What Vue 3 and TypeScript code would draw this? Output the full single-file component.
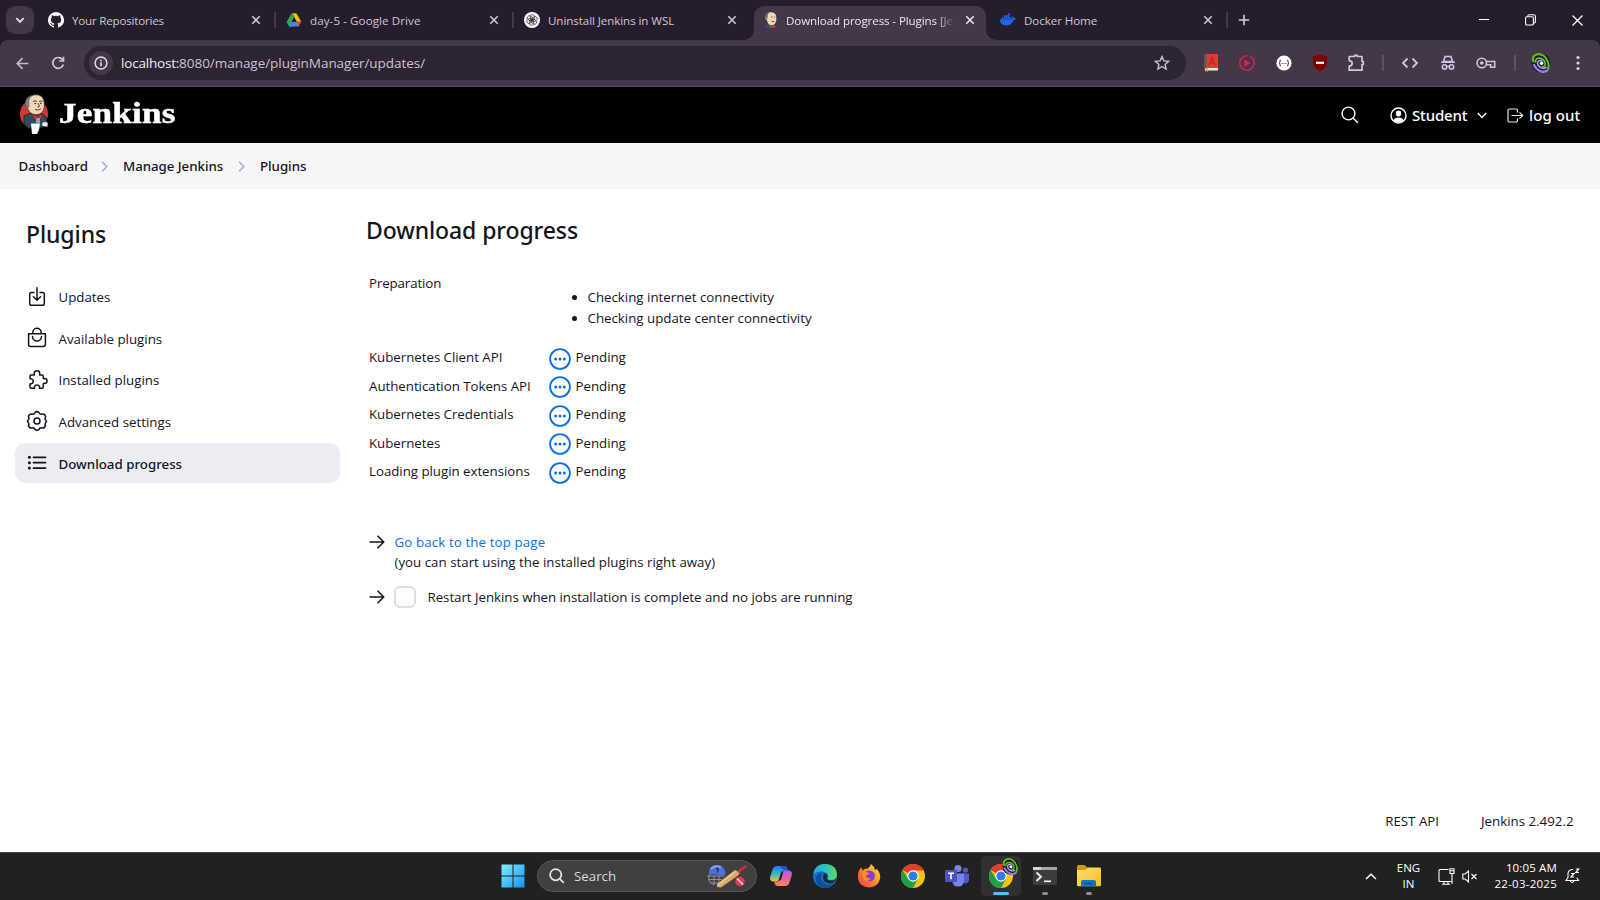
<script setup lang="ts">
interface Tab {
  title: string
  icon: 'github' | 'drive' | 'gpt' | 'jenkins' | 'docker'
  active?: boolean
}
const tabs: Tab[] = [
  { title: 'Your Repositories', icon: 'github' },
  { title: 'day-5 - Google Drive', icon: 'drive' },
  { title: 'Uninstall Jenkins in WSL', icon: 'gpt' },
  { title: 'Download progress - Plugins [Je', icon: 'jenkins', active: true },
  { title: 'Docker Home', icon: 'docker' },
]
const menu = [
  { label: 'Updates', icon: 'updates' },
  { label: 'Available plugins', icon: 'bag' },
  { label: 'Installed plugins', icon: 'puzzle' },
  { label: 'Advanced settings', icon: 'gear' },
  { label: 'Download progress', icon: 'list', active: true },
]
const jobs: string[] = [
  'Kubernetes Client API',
  'Authentication Tokens API',
  'Kubernetes Credentials',
  'Kubernetes',
  'Loading plugin extensions',
]
</script>

<template>
  <div class="screen">
    <svg width="0" height="0" class="defs">
      <defs>
        <linearGradient id="win" x1="0" y1="0" x2="1" y2="1">
          <stop offset="0" stop-color="#7ff0fb" /><stop offset="1" stop-color="#0e93f5" />
        </linearGradient>
        <linearGradient id="cpa" x1="0" y1="0" x2="0" y2="1">
          <stop offset="0" stop-color="#1c7be8" /><stop offset=".5" stop-color="#35b6c9" /><stop offset="1" stop-color="#f2c52c" />
        </linearGradient>
        <linearGradient id="cpb" x1="0" y1="0" x2="0" y2="1">
          <stop offset="0" stop-color="#a765f0" /><stop offset=".5" stop-color="#ea5da0" /><stop offset="1" stop-color="#ff8a4c" />
        </linearGradient>
        <linearGradient id="edgea" x1="0" y1="0" x2="1" y2="0">
          <stop offset="0" stop-color="#2aa7e8" /><stop offset=".6" stop-color="#35c7b0" /><stop offset="1" stop-color="#62dd52" />
        </linearGradient>
        <linearGradient id="ffx" x1="1" y1="0" x2="0" y2="1">
          <stop offset="0" stop-color="#ffe33f" /><stop offset=".5" stop-color="#ff8a1e" /><stop offset="1" stop-color="#f8315a" />
        </linearGradient>
        <linearGradient id="fold" x1="0" y1="0" x2="1" y2="1">
          <stop offset="0" stop-color="#ffdf70" /><stop offset="1" stop-color="#f8bb2a" />
        </linearGradient>
        <symbol id="chrome" viewBox="0 0 24 24">
          <circle cx="12" cy="12" r="12" fill="#fbc116" />
          <path d="M12 12 1.6 6A12 12 0 0 1 22.4 6L22.6 6.5H12Z" fill="#e33b2e" />
          <path d="M1.6 6A12 12 0 0 0 12 24L17 15 12 12 7.2 14.8Z" fill="#1fa045" />
          <circle cx="12" cy="12" r="5.7" fill="#fff" /><circle cx="12" cy="12" r="4.6" fill="#2d7de9" />
        </symbol>
        <symbol id="swirl" viewBox="0 0 20 20">
          <ellipse cx="10" cy="10" rx="9.400" ry="9.600" fill="#15131f" />
          <g fill="none" stroke-linecap="round">
            <path d="M2.500 8.500C0 2 8-1 13 3C17 6.500 18.500 12 17 16" stroke="#5fb62f" stroke-width="2.200" />
            <path d="M3 12C6 18 12 20.500 16 17.500" stroke="#9a7cf0" stroke-width="2.400" />
            <path d="M4.500 9C4 4 11 4 13.500 8.500C15 11.500 14 14 11.500 13.500" stroke="#68bf3a" stroke-width="1.700" />
            <path d="M15 14.500C11 17 6.500 13 6.500 10C6.700 7.500 9 7 10.500 8" stroke="#b39bf8" stroke-width="1.700" />
          </g>
          <circle cx="10.500" cy="10.300" r="1.800" fill="#fff" />
        </symbol>
        <symbol id="butler" viewBox="0 0 28 40">
          <ellipse cx="14" cy="20" rx="14" ry="14.500" fill="#d33833" />
          <path d="M4 22 11 19 21 19 26 23 27 28 26 32 19 34 8 34 4 29Z" fill="#2f4b5e" stroke="#1b2630" />
          <path d="M5.500 10C6 3 12 .5 17 .8C22 1.200 24.500 5 24.300 11C24.500 15 23 19.500 18 20.500C12 21.500 9 18 8 15C6 14.500 5 12.500 5.500 10Z" fill="#efd6b8" stroke="#3a302c" stroke-width=".8" />
          <path d="M5.500 11C4.500 6 8 2 12 1.500C9 4 9 6 8.500 8L9 13 7 14Z" fill="#8a8580" stroke="#4a4441" stroke-width=".6" />
          <path d="M13 7.500Q15 6 17 7.500M19 7.500Q21 6 22.500 7.500M18 9 19.500 12.500 17.500 13M15 15.500Q18.500 17 21 14.800" fill="none" stroke="#433029" stroke-width=".9" />
          <circle cx="15.300" cy="9.500" r=".8" fill="#1a1a1a" /><circle cx="20.800" cy="9.300" r=".8" fill="#1a1a1a" />
          <path d="M13 20.500 17.500 22.500 22 20V25L17.500 23.500 13.500 26Z" fill="#d33833" stroke="#7d1815" stroke-width=".5" />
          <path d="M16 24H20V29H16Z" fill="#8fa5b5" />
          <path d="M11 29.500H20L19 36 17 40H12Z" fill="#fff" />
          <path d="M22 29Q25 26.500 28 29L27.500 33 22 32Z" fill="#e9eef2" stroke="#444" stroke-width=".5" />
        </symbol>
      </defs>
    </svg>

    <header class="tabstrip">
      <button class="tabsearch"><svg width="28" height="28" viewBox="0 0 28 28"><path d="M10.300 12.200 14 15.900 17.700 12.200" fill="none" stroke="#e6d9ec" stroke-width="1.900" /></svg></button>
      <div v-for="t in tabs" :key="t.title" class="tab" :class="{ active: t.active, [t.icon]: true }">
        <svg class="fav" width="16" height="16" viewBox="0 0 16 16">
          <path v-if="t.icon === 'github'" fill="#fff" d="M8 0a8 8 0 0 0-2.530 15.590c.4.070.550-.170.550-.380v-1.490c-2.010.370-2.530-.490-2.690-.940-.090-.230-.480-.940-.820-1.130-.280-.150-.680-.520-.010-.530.630-.010 1.080.580 1.230.820.720 1.210 1.870.870 2.330.660.070-.520.280-.870.510-1.070-1.780-.2-3.640-.890-3.640-3.950 0-.870.310-1.590.820-2.150-.080-.2-.360-1.020.080-2.120 0 0 .670-.210 2.200.820a7.600 7.600 0 0 1 4 0c1.530-1.040 2.200-.820 2.200-.820.440 1.100.160 1.920.080 2.120.510.560.820 1.270.820 2.150 0 3.070-1.870 3.750-3.650 3.950.290.250.540.730.540 1.480v2.200c0 .210.150.460.550.380A8 8 0 0 0 8 0Z" />
          <g v-else-if="t.icon === 'drive'">
            <path fill="#fbbc04" d="M6 1.200H10.400L15.300 9.800H10.800Z" />
            <path fill="#4285f4" d="M3.200 9.800H12.800V14.500H3.200Z" /><path fill="#34a853" d="M5.600 1.200 8 5.300 3.200 14.500.6 10Z" />
            <path fill="#4285f4" d="M5.500 9.800H8L6 14.500H3.100Z" />
            <path fill="#ea4335" d="M11 9.800H15.400L12.700 14.500Z" /><path fill="#251d2c" d="M8 5.800 10.300 9.800H5.700Z" />
          </g>
          <g v-else-if="t.icon === 'gpt'">
            <circle cx="8" cy="8" r="8" fill="#fff" />
            <g fill="none" stroke="#333" stroke-width=".75">
              <rect v-for="a in [0, 60, 120, 180, 240, 300]" :key="a" x="6.300" y="2.600" width="4.300" height="6.200" rx="2.100" :transform="`rotate(${a} 8 8)`" />
            </g>
          </g>
          <g v-else-if="t.icon === 'jenkins'">
            <path d="M1.500 16 2.500 13 6 12H11L13.500 16Z" fill="#2f5361" />
            <path d="M2.500 5C2.500 1 6 .2 8.500.3C12 .5 13.500 3 13.300 6.500C13.500 10 12 13 9 13.200C5.500 13.300 4.300 10.500 4 8C2.800 7.500 2.500 6.300 2.500 5Z" fill="#f0d6b7" />
            <path d="M2.500 5C2.500 2.500 4 1 6 .7C4.500 2.500 4.800 4 4.300 7.500Z" fill="#6e6358" />
            <path d="M8 5H9.300M11 5H12.200M8.500 9.500H11.500" stroke="#5c4434" stroke-width=".9" />
            <path d="M6.500 13 9 14.300 12 12.800V16L9 15 7 16Z" fill="#d33833" />
          </g>
          <g v-else fill="#1d63ed">
            <path d="M0 7.200H12.300C11.900 6 12 5 12.700 4.200C13.500 4.800 13.700 5.500 13.700 6.300C14.600 6.100 15.400 6.200 16 6.600C15.600 7.700 14.700 8.200 13.500 8.200C12.300 11.700 9.700 13.400 6 13.400C2.200 13.400 0 11.200 0 7.200Z" />
            <path d="M1.800 5.200h1.800v1.700H1.800zM3.900 5.200h1.800v1.700H3.900zM6 5.200h1.800v1.700H6zM8.100 5.200h1.800v1.700H8.100zM3.900 3.200h1.800v1.700H3.900zM6 3.200h1.800v1.700H6zM8.100 3.200h1.800v1.700H8.100zM8.100 1.200h1.800v1.700H8.100zM10.200 5.200h1.300v1.700h-1.300z" />
          </g>
        </svg>
        <span class="ttl">{{ t.title }}</span>
        <svg class="cls" width="10" height="10" viewBox="0 0 10 10"><path d="M1.300 1.300 8.700 8.700M8.700 1.300 1.300 8.700" stroke="currentColor" stroke-width="1.600" /></svg>
        <svg v-if="t.active" class="flare left" width="10" height="10"><path d="M10 0V10H0A10 10 0 0 0 10 0Z" fill="#44374a" /></svg>
        <svg v-if="t.active" class="flare right" width="10" height="10"><path d="M0 0V10H10A10 10 0 0 1 0 0Z" fill="#44374a" /></svg>
      </div>
      <svg class="plus" width="12" height="12"><path d="M6 .8V11.200M.8 6H11.200" stroke="#d9c9e0" stroke-width="1.600" /></svg>
      <div class="wincontrols">
        <svg width="10" height="10"><path d="M0 4.500H10" stroke="#fff" /></svg>
        <svg width="11" height="12" fill="none" stroke="#fff" stroke-width="1.100"><rect x=".6" y="2.800" width="7.800" height="8.200" rx="1.300" /><path d="M2.800 2.600V2A1.400 1.400 0 0 1 4.200.7H8.500A1.900 1.900 0 0 1 10.400 2.600V7.500A1.400 1.400 0 0 1 9 9" /></svg>
        <svg width="11" height="11"><path d="M.5.5 10.500 10.500M10.500.5.5 10.500" stroke="#fff" stroke-width="1.200" /></svg>
      </div>
    </header>

    <div class="toolbar">
      <svg class="back" width="13" height="13" fill="none" stroke="#c9b8d0" stroke-width="1.700"><path d="M12.300 6.500H1.500M6.600 1.200 1.300 6.500 6.600 11.800" /></svg>
      <svg class="reload" width="14" height="14" fill="none" stroke="#d3c4da" stroke-width="1.700"><path d="M12 4.400A5.400 5.400 0 1 0 12.400 8.500" /><path d="M12.500.8V5H8.200" /></svg>
      <div class="omnibox">
        <span class="info"><svg width="14" height="14"><circle cx="7" cy="7" r="5.900" fill="none" stroke="#e4dbe8" stroke-width="1.500" /><path d="M7 6.200V10.200M7 3.700V5.200" stroke="#e4dbe8" stroke-width="1.600" /></svg></span>
        <span class="url"><b>localhost:</b>8080/manage/pluginManager/updates/</span>
        <svg class="star" width="16" height="16" viewBox="0 0 16 16"><path d="M8 1.600 9.900 5.900 14.600 6.300 11.100 9.400 12.100 14 8 11.500 3.900 14 4.900 9.400 1.400 6.300 6.100 5.900Z" fill="none" stroke="#cbbfd0" stroke-width="1.400" /></svg>
      </div>
      <div class="exts">
        <svg width="36" height="20"><rect x="11" y="1" width="14" height="14" fill="#e23c30" /><rect x="11" y="1" width="2.600" height="16" fill="#5a5a60" /><path d="M12.500 15H25V17.500H12.500Z" fill="#eee5df" /><path d="M16 12.500 19 4 22 12.500M17 9.800H21" fill="none" stroke="#b42b22" stroke-width="1.400" /><path d="M12 15H15V19L13.500 17.500 12 19Z" fill="#f2b71f" /></svg>
        <svg width="36" height="20"><circle cx="18" cy="10" r="7.200" fill="none" stroke="#cf2450" stroke-width="1.600" stroke-dasharray="34 3" /><path d="M15.300 6.200 21.500 10 15.300 13.800Z" fill="#d9264f" /></svg>
        <svg width="36" height="20"><circle cx="18" cy="10" r="7.600" fill="#fff" /><path d="M15 7Q13.800 7 14 8.500T13 10Q14.100 10 14 11.500T15 13M21 7Q22.200 7 22 8.500T23 10Q21.900 10 22 11.500T21 13" fill="none" stroke="#333" /><path d="M15.800 10.500H20.500" stroke="#555" stroke-dasharray="1 .8" /></svg>
        <svg width="36" height="20"><path d="M18 1.500Q21 3.200 25 3.200V9.500Q25 15 18 18.500Q11 15 11 9.500V3.200Q15 3.200 18 1.500Z" fill="#800000" /><rect x="14" y="8.700" width="8" height="2.200" fill="#fff" /></svg>
        <svg width="36" height="20"><path d="M11.200 3.500H16.500V2.300H19.300V3.500H24V8.500H25.300V11.500H24V17.200H11.200V13.200Q14.200 12.700 14.200 10.400T11.200 7.600Z" fill="none" stroke="#d5c5dc" stroke-width="1.700" stroke-linejoin="round" /></svg>
      </div>
      <i class="vsep" />
      <div class="tools">
        <svg width="38" height="20" fill="none" stroke="#d5c5dc" stroke-width="1.800"><path d="M16.500 5.500 12 10 16.500 14.500M21.500 5.500 26 10 21.500 14.500" /></svg>
        <svg width="38" height="20" fill="none" stroke="#d5c5dc" stroke-width="1.500"><path d="M12 9.200H26" /><path d="M14.500 8.500 16 3.500H22L23.500 8.500Z" /><circle cx="15.500" cy="14" r="2.200" /><circle cx="22.500" cy="14" r="2.200" /><path d="M17.700 13.500H20.300" /></svg>
        <svg width="38" height="20" fill="none" stroke="#d5c5dc" stroke-width="1.600"><circle cx="14.800" cy="10" r="4.700" /><circle cx="14.800" cy="10" r="1" fill="#d5c5dc" /><path d="M19.500 8.500H27.700V14.200H23.700V11.700H19.300" /></svg>
      </div>
      <i class="vsep second" />
      <svg class="avatar" width="20" height="20"><use href="#swirl" /></svg>
      <svg class="dots" width="4" height="16" fill="#dccfe2"><circle cx="2" cy="2.500" r="1.600" /><circle cx="2" cy="8" r="1.600" /><circle cx="2" cy="13.500" r="1.600" /></svg>
    </div>

    <div class="jheader">
      <svg class="logo" width="28" height="40"><use href="#butler" /></svg>
      <span class="brand">Jenkins</span>
      <svg class="find" width="18" height="18" fill="none" stroke="#fff" stroke-width="1.400"><circle cx="7.500" cy="7.500" r="6.400" /><path d="M12.300 12.300 17 17" /></svg>
      <svg class="person" width="17" height="17"><circle cx="8.500" cy="8.500" r="7.500" fill="none" stroke="#fff" stroke-width="1.400" /><ellipse cx="8.500" cy="6.600" rx="2.700" ry="3" fill="#fff" /><path d="M3.500 13.500Q4.500 10.600 8.500 10.600T13.500 13.500Q11.500 15.700 8.500 15.700T3.500 13.500Z" fill="#fff" /></svg>
      <span class="user">Student</span>
      <svg class="chev" width="10" height="7"><path d="M.8 1 5 5.500 9.200 1" fill="none" stroke="#fff" stroke-width="1.400" /></svg>
      <svg class="exit" width="17" height="16" fill="none" stroke="#e8e8e8" stroke-width="1.200"><path d="M10.500 4.500V2.500A1.500 1.500 0 0 0 9 1H2.500A1.500 1.500 0 0 0 1 2.500V12.500A1.500 1.500 0 0 0 2.500 14H9A1.500 1.500 0 0 0 10.500 12.500V10.500M4.500 7.500H15.500M12.500 4.300 15.700 7.500 12.500 10.700" /></svg>
      <span class="logout">log out</span>
    </div>

    <nav class="crumbs">
      <span class="c1">Dashboard</span>
      <svg width="7" height="11"><path d="M1 .8 5.800 5.500 1 10.200" fill="none" stroke="#9bb0d0" stroke-width="1.500" /></svg>
      <span class="c2">Manage Jenkins</span>
      <svg width="7" height="11"><path d="M1 .8 5.800 5.500 1 10.200" fill="none" stroke="#9bb0d0" stroke-width="1.500" /></svg>
      <span class="c3">Plugins</span>
    </nav>

    <main class="page">
      <aside class="side">
        <h1>Plugins</h1>
        <a v-for="m in menu" :key="m.label" class="item" :class="{ on: m.active }">
          <svg width="22" height="22" viewBox="0 0 22 22" fill="none" stroke="#14141f" stroke-width="1.500" stroke-linecap="round" stroke-linejoin="round">
            <path v-if="m.icon === 'updates'" d="M8 6.500H5.500A1.800 1.800 0 0 0 3.700 8.300V17.500A1.800 1.800 0 0 0 5.500 19.300H16.500A1.800 1.800 0 0 0 18.300 17.500V8.300A1.800 1.800 0 0 0 16.500 6.500H14M11 1.800V14M7.500 10.700 11 14.200 14.500 10.700" />
            <path v-else-if="m.icon === 'bag'" d="M2.600 6.800H19.400V17.500A2 2 0 0 1 17.400 19.500H4.600A2 2 0 0 1 2.600 17.500ZM6.800 6.500V5.500A4.200 4.200 0 0 1 15.200 5.500V6.500M6.500 9.500A4.500 4.500 0 0 0 15.500 9.500" />
            <path v-else-if="m.icon === 'puzzle'" d="M5 6H8.300C8.700 5.800 8.300 4.800 8.300 4.200C8.300 2.800 9.500 1.700 11 1.700S13.700 2.800 13.700 4.200C13.700 4.800 13.300 5.800 13.700 6H15.800A1.500 1.500 0 0 1 17.300 7.500V9.500C17.500 9.900 18.500 9.600 19 9.600C20.400 9.600 21 10.900 21 12S20.400 14.400 19 14.400C18.500 14.400 17.500 14.100 17.300 14.500V17.800A1.500 1.500 0 0 1 15.800 19.300H13.600C13.400 19 13.700 18 13.500 17.400C13.100 16.300 12 15.900 11 15.900S8.900 16.300 8.500 17.400C8.300 18 8.600 19 8.400 19.300H5.500A1.500 1.500 0 0 1 4 17.800V15C4.200 14.700 5 14.900 5.600 14.700C6.700 14.300 7.300 13.300 7.300 12.300S6.700 10.300 5.600 9.900C5 9.700 4.200 9.900 4 9.600V7.500A1.500 1.500 0 0 1 5 6Z" />
            <g v-else-if="m.icon === 'gear'"><circle cx="11" cy="11" r="3" /><path d="M9 2.500Q11 .8 13 2.500Q13.700 4.600 15.800 4.100Q19.300 3.700 19.700 6.900Q18.300 8.900 19.800 10.200Q21.200 11.400 19.800 12.400Q18.500 14 19.500 15.500Q18.800 18.400 16 18Q13.800 17.300 13.100 19.400Q11 21.200 8.900 19.400Q8.200 17.300 6 18Q3.200 18.400 2.500 15.500Q3.500 14 2.200 12.400Q.8 11.200 2.200 10Q3.600 8.600 2.400 6.800Q3 3.700 6.200 4.100Q8.300 4.600 9 2.500Z" /></g>
            <g v-else><path d="M7.500 5.300H19.500M7.500 10.700H19.500M7.500 16.100H19.500" stroke-width="1.700" /><g fill="#14141f" stroke="none"><circle cx="3.400" cy="5.300" r="1.500" /><circle cx="3.400" cy="10.700" r="1.500" /><circle cx="3.400" cy="16.100" r="1.500" /></g></g>
          </svg>
          <span>{{ m.label }}</span>
        </a>
      </aside>
      <section class="content">
        <h1>Download progress</h1>
        <div class="prep">
          <span>Preparation</span>
          <ul><li>Checking internet connectivity</li><li>Checking update center connectivity</li></ul>
        </div>
        <div v-for="j in jobs" :key="j" class="job">
          <span class="name">{{ j }}</span>
          <svg width="22" height="22"><circle cx="11" cy="11" r="9.900" fill="none" stroke="#0b6fe8" stroke-width="1.800" /><g fill="#0b6fe8"><circle cx="6.700" cy="11" r="1.500" /><circle cx="11" cy="11" r="1.500" /><circle cx="15.300" cy="11" r="1.500" /></g></svg>
          <span class="pending">Pending</span>
        </div>
        <div class="go">
          <svg width="16" height="14" fill="none" stroke="#14141f" stroke-width="1.500"><path d="M.5 7H14.500M8.500.8 14.700 7 8.500 13.200" /></svg>
          <a>Go back to the top page</a>
        </div>
        <p class="hint">(you can start using the installed plugins right away)</p>
        <div class="restart">
          <svg width="16" height="14" fill="none" stroke="#14141f" stroke-width="1.500"><path d="M.5 7H14.500M8.500.8 14.700 7 8.500 13.200" /></svg>
          <i class="box" />
          <span>Restart Jenkins when installation is complete and no jobs are running</span>
        </div>
      </section>
    </main>
    <footer class="foot"><span>REST API</span><span>Jenkins 2.492.2</span></footer>

    <div class="taskbar">
      <div class="apps">
        <svg class="start" width="24" height="24" fill="url(#win)"><path d="M.5.500H11.500V11.500H.5ZM12.500.500H23.500V11.500H12.500ZM.5 12.500H11.500V23.500H.5ZM12.500 12.500H23.500V23.500H12.500Z" /></svg>
        <div class="search">
          <svg width="16" height="16" fill="none" stroke="#e6e6e6" stroke-width="1.700"><circle cx="6.700" cy="6.700" r="5.600" /><path d="M10.800 10.800 14.800 14.800" /></svg>
          <span>Search</span>
          <svg class="cricket" width="42" height="26">
            <path d="M1 13H17M2 16.500H16M4 20H15M3 12V18L8 22M8 12V22M13 13V20" fill="none" stroke="#8a8f9a" stroke-width="1" />
            <path d="M3 12Q2 3 10 2Q18 1.500 19.500 9.500L18.500 14Q11 10 3 12Z" fill="#4c6fd8" /><path d="M5 6Q9 1.500 15 4.500" fill="none" stroke="#86a5f7" stroke-width="2" /><path d="M10 5.500H12L11.500 9.500" fill="none" stroke="#1e3577" stroke-width="1.400" />
            <path d="M11 21 29 7 34 9.500 32 12.500 15 24.500 11 24Z" fill="#e0a866" /><path d="M12 21.800 29.500 8.500" stroke="#f6d09a" stroke-width="1.300" /><path d="M32 9 40 3" stroke="#d62b3c" stroke-width="2.200" />
            <circle cx="34" cy="18.500" r="4.700" fill="#e8384e" /><path d="M31 15.500 37 21.500" stroke="#ffdfe3" stroke-width="1.500" />
          </svg>
        </div>
        <svg class="ic cop" width="24" height="24">
          <path d="M8 2H15.500Q17.500 2 18.300 4.500L19 7H14.500Q12.500 7 11.900 9L10 15Q9.300 17.500 7 17.500H4Q.4 17 1.200 13L3.300 6Q4.500 2 8 2Z" fill="url(#cpa)" />
          <path d="M16 22H8.500Q6.500 22 5.700 19.500L5 17.500H8Q10.500 17.500 11.200 15L13.500 8.500Q14.200 6.500 16.500 6.500H20Q23.600 7 22.800 11L20.700 18Q19.500 22 16 22Z" fill="url(#cpb)" />
          <path d="M10 2H15.500Q17.500 2 18.300 4.500L19 6.500H16.500Q14 6.500 13 4.500Q12 2 10 2Z" fill="#1858c9" />
          <path d="M10.500 14.500 12.500 8.500Q13 7.500 14.300 7.500L12.500 14.500Q12 16.500 10 16.500Z" fill="#232323" />
        </svg>
        <svg class="ic" width="24" height="24"><circle cx="12" cy="12" r="12" fill="#1272c4" /><path d="M.3 10Q2-.5 13 0Q24 1 24 10.500Q23.500 16 17.500 16Q13.500 16 14.300 13.500Q16 10.500 12.500 8.500Q6 5.500.3 10Z" fill="url(#edgea)" /><path d="M8 12Q8 18 13 20.500Q17 22 21.500 19Q17 24.500 11 24Q3 22 3 15Q3.500 9.500 9.500 8.300Q8 10 8 12Z" fill="#0d4f9e" /><path d="M12 9Q16 11 14.300 13.500Q13.500 16 17.500 16.500Q22 16.500 23.300 14.500Q21.500 20 16 19.500Q10 18.500 10 13Q10 10 12 9Z" fill="#1d2b36" /></svg>
        <svg class="ic" width="24" height="24"><path d="M1 10Q2 5 4.500 3.500L5.500 6.500Q8 4 11 4.500Q13.500 2 14 0Q17 2 18 6L20 5Q24 10 23 15Q21 23 12 23.500Q3 23 1 15Z" fill="url(#ffx)" /><circle cx="12.300" cy="12" r="5.600" fill="#7c41dd" /><path d="M5.500 8Q9 7 12.500 9.500Q10 11 9 11.500Q9.500 15 14 14.500Q12 18 8 16.500Q4.500 14 5.500 8Z" fill="#ff8a26" /></svg>
        <svg class="ic" width="24" height="24"><use href="#chrome" /></svg>
        <svg class="ic" width="24" height="24"><circle cx="13" cy="4.500" r="3.600" fill="#7b83eb" /><circle cx="20.500" cy="6" r="2.600" fill="#5059c9" /><path d="M17 9.500H24V16Q23.500 19.500 20 19.500L17 18Z" fill="#5059c9" /><path d="M7.500 9.500H19V17Q18.500 22.500 13 22.500T7.500 17Z" fill="#7b83eb" /><rect x="0" y="6" width="12" height="12" rx="1.200" fill="#4b53bc" /><path d="M3 9.300H9M6 9.300V15.200" stroke="#fff" stroke-width="1.600" /></svg>
        <div class="tile"><svg width="24" height="24"><use href="#chrome" /></svg><svg class="mini" width="17" height="17"><use href="#swirl" /></svg><i /></div>
        <div class="app"><svg width="24" height="18"><rect width="24" height="18" rx="1" fill="#3c3c3c" /><rect width="24" height="3" fill="#a5a5a5" /><rect width="8" height="3" fill="#d5d5d5" /><path d="M3.500 5.500 8 9.700 3.500 14" fill="none" stroke="#e8e8e8" stroke-width="2" /><path d="M11 14.300H18" stroke="#fff" stroke-width="1.600" /></svg><i /></div>
        <div class="app"><svg width="24" height="22"><path d="M0 1.500Q0 0 1.500 0H7.500L10 2.300V6H0Z" fill="#d8950f" /><path d="M0 5H8.500L10.500 2.600H22.700Q24 2.600 24 4V20Q24 21.300 22.700 21.300H1.300Q0 21.300 0 20Z" fill="url(#fold)" /><path d="M4 21.300V17Q4 15 6 15H17Q19 15 19 17V21.300Z" fill="#1073c6" /><path d="M7.500 18.500H15.500" stroke="#0b4f8f" stroke-width="1.300" /></svg><i /></div>
      </div>
      <div class="tray">
        <svg class="up" width="12" height="7"><path d="M1 6 6 1.200 11 6" fill="none" stroke="#fff" stroke-width="1.500" /></svg>
        <div class="lang">ENG<br>IN</div>
        <svg class="net" width="17" height="17" fill="none" stroke="#fff" stroke-width="1.100"><path d="M10.500 1.500H2A1 1 0 0 0 1 2.500V12.500A1 1 0 0 0 2 13.500H13.500M4 16.200H12M6 13.500V16M10 13.500V16" /><path d="M12 .8H16V5.500H12ZM12 2.800H16M14 5.500V16" /></svg>
        <svg class="spk" width="16" height="13" fill="none" stroke="#fff" stroke-width="1.100"><path d="M.8 4H3.200L6.500 1V12L3.200 9H.8Z" /><path d="M9.500 4 14.500 9M14.500 4 9.500 9" /></svg>
        <div class="time">10:05 AM<br><span>22-03-2025</span></div>
        <svg class="bell" width="15" height="16" fill="none" stroke="#fff" stroke-width="1.100"><path d="M8 1.500Q3 1.500 3 6V9.500L1 12.500H13.500L11.800 9.800M5.300 13Q7.200 16 9.200 13" /><path d="M6 5.500H9L6 9H9.200M10.800 1H13.800L10.800 4.500H14" stroke-width="1.200" /></svg>
      </div>
    </div>
  </div>
</template>

<style>
body { background: #fff; overflow: hidden; }
</style>
<style scoped>
.screen { width: 1600px; height: 900px; display: flex; flex-direction: column; font-family: "Open Sans", "Noto Sans", sans-serif; font-size: 13.3px; color: #14141f; background: linear-gradient(#251d2c 0 60px, #fff 60px); overflow: hidden; }
.defs { position: absolute; }
svg { display: block; flex: none; }
h1, ul, p { margin: 0; padding: 0; }
.tabstrip { height: 40px; flex: none; display: flex; align-items: center; background: #251d2c; position: relative; z-index: 1; }
.tabsearch { width: 28px; height: 28px; margin: 0 4px 0 6px; padding: 0; border: 0; border-radius: 9px; background: #44374a; flex: none; }
.tab { width: 238px; height: 40px; box-sizing: border-box; display: flex; align-items: center; padding-left: 10px; color: #d3c3da; font-size: 11.6px; letter-spacing: -.08px; position: relative; flex: none; }
.tab.github { letter-spacing: -.2px; }
.tab.drive { letter-spacing: .08px; }
.tab .ttl { flex: none; width: 170px; margin-left: 8px; white-space: nowrap; line-height: 20px; padding-top: 1px; }
.tab .cls { margin-left: 9px; margin-right: 13px; }
.tab::after { content: ""; width: 2px; height: 16px; background: #44374a; flex: none; }
.tab.gpt { width: 240px; }
.tab.gpt::after { background: transparent; }
.tab.active { background: #44374a; width: 232px; height: 34px; margin: 6px 6px 0 0; padding: 0 0 6px 9px; border-radius: 10px 10px 0 0; color: #ece4f0; }
.tab.active::after { display: none; }
.tab.active .ttl { margin-left: 7px; letter-spacing: -.11px; -webkit-mask-image: linear-gradient(90deg, #000 150px, transparent 169px); mask-image: linear-gradient(90deg, #000 150px, transparent 169px); }
.tab.docker { padding-left: 8px; width: 238px; }
.flare { position: absolute; bottom: 0; }
.flare.left { left: -10px; }
.flare.right { right: -10px; }
.plus { margin-left: 8px; }
.wincontrols { margin-left: auto; display: flex; align-items: center; gap: 36px; padding-right: 17.5px; }
.toolbar { height: 46px; flex: none; display: flex; align-items: center; background: #44374a; border-bottom: 1px solid #574b5d; border-radius: 8px 8px 0 0; position: relative; z-index: 2; }
.back { margin-left: 16px; }
.reload { margin-left: 22px; }
.omnibox { margin-left: 19px; width: 1102px; height: 34px; border-radius: 17px; background: #2c2333; display: flex; align-items: center; box-sizing: border-box; padding: 0 16px 0 5px; }
.info { width: 24px; height: 24px; border-radius: 50%; background: #44374a; display: flex; align-items: center; justify-content: center; }
.url { margin-left: 8px; font-size: 13.5px; letter-spacing: -.04px; color: #cdc1d2; }
.url b { font-weight: 400; color: #f3ecf6; letter-spacing: -.2px; }
.star { margin-left: auto; }
.exts { display: flex; margin-left: 7px; gap: .3px; }
.vsep { width: 2px; height: 16px; background: #5e5164; margin-left: 7.8px; }
.tools { display: flex; margin-left: 7px; }
.vsep.second { margin-left: 9px; }
.avatar { margin-left: 15.500px; }
.dots { margin-left: 24.500px; }
.jheader { height: 56px; flex: none; background: #000; color: #fff; display: flex; align-items: center; padding-left: 19.500px; font-family: "Noto Sans", sans-serif; font-weight: 500; }
.logo { margin-top: -2px; }
.brand { font: 700 30px/40px "Liberation Serif", serif; transform: scaleX(1.17); transform-origin: 0 50%; width: 100px; letter-spacing: .2px; margin-left: 11.500px; margin-top: -5px; -webkit-text-stroke: .5px #fff; }
.find { margin-left: auto; }
.person { margin-left: 30.500px; margin-top: 0; }
.user { font-size: 15px; letter-spacing: -.15px; margin-left: 5.500px; width: 55px; }
.chev { margin-left: 10px; }
.exit { margin-left: 20px; margin-top: 1px; }
.logout { font-size: 15px; letter-spacing: .1px; margin-left: 5px; width: 51px; margin-right: 20px; white-space: nowrap; }
.crumbs { height: 46px; flex: none; background: #f5f6f8; display: flex; align-items: center; padding-left: 18.500px; font: 500 13.300px "Noto Sans", sans-serif; letter-spacing: -.04px; }
.crumbs span { white-space: nowrap; padding-bottom: 1px; }
.crumbs svg { margin: 0 15px 0 14px; }
.c1 { width: 68.500px; }
.c2 { width: 101px; }
.page { flex: 1; display: flex; background: #fff; min-height: 0; }
h1 { font: 500 23px/30px "Noto Sans", sans-serif; letter-spacing: -.1px; }
.side { width: 325px; margin-left: 15px; display: flex; flex-direction: column; gap: 1.600px; flex: none; }
.side h1 { margin: 30px 0 26px 11px; }
.item { height: 40px; border-radius: 10px; display: flex; align-items: center; padding-left: 11px; box-sizing: border-box; }
.item span { margin-left: 10.500px; padding-top: 1px; }
.item.on { background: #ecedf3; font-family: "Noto Sans", sans-serif; font-weight: 500; }
.item.on span { padding-top: 2px; }
.content { margin-left: 26px; }
.content h1 { margin-top: 26px; }
.prep { display: flex; margin: 28px 0 0 3px; height: 70px; line-height: 21px; }
.prep > span { width: 178.500px; letter-spacing: -.12px; }
ul { margin: 14px 0 0 40px; }
li { line-height: 21px; }
.job { height: 28.500px; display: flex; align-items: center; margin-left: 3px; }
.job .name { width: 180px; white-space: nowrap; letter-spacing: -.03px; }
.job svg { margin-top: 3px; }
.pending { margin-left: 4.500px; letter-spacing: -.03px; }
.go { display: flex; align-items: center; margin: 45.500px 0 0 3px; height: 21px; }
.go a { color: #0b6fe8; margin-left: 9.500px; letter-spacing: .12px; }
.hint { margin-left: 28.500px; line-height: 21px; letter-spacing: .01px; }
.restart { display: flex; align-items: center; height: 22px; margin: 13px 0 0 3px; letter-spacing: -.035px; }
.box { width: 22px; height: 22px; box-sizing: border-box; border: 2px solid #d9dfe9; border-radius: 6px; margin: 0 11.500px 0 9px; background: #fdfdfe; }
.foot { height: 62px; flex: none; display: flex; justify-content: flex-end; gap: 42px; padding-right: 26.500px; background: #fff; line-height: 62px; }
.taskbar { height: 48px; flex: none; box-sizing: border-box; border-top: 1px solid #444; background: #212121; display: flex; color: #fff; padding-bottom: 1px; }
.apps { display: flex; align-items: center; margin-left: 500.500px; width: 760px; flex: none; }
.search { width: 220px; height: 32px; margin-left: 12.500px; border-radius: 16px; box-sizing: border-box; border: 1px solid #555; background: #404040; display: flex; align-items: center; padding: 0 8px 0 10.500px; font-size: 13.300px; color: #dadada; }
.search span { margin-left: 9.500px; }
.cricket { margin-left: auto; }
.ic { margin-right: 20px; }
.ic.cop { margin-left: 12px; }
.tile { width: 40px; height: 40px; border-radius: 5px; background: #303030; display: flex; align-items: center; justify-content: center; position: relative; margin: 0 12px 0 -8px; }
.tile .mini { position: absolute; left: 21px; top: 2px; }
.tile i { position: absolute; bottom: 1px; left: 12px; width: 16px; height: 3px; border-radius: 2px; background: #4cc2ff; }
.app { width: 24px; height: 40px; display: flex; align-items: center; justify-content: center; position: relative; margin-right: 20px; }
.app i { position: absolute; bottom: 1px; left: 9px; width: 6px; height: 3px; border-radius: 2px; background: #8d8d8d; }
.tray { display: flex; align-items: center; margin-left: auto; font-size: 11.500px; line-height: 16px; padding-right: 20px; }
.lang { text-align: center; width: 30px; margin-left: 17px; }
.net { margin-left: 14.500px; }
.spk { margin-left: 7px; }
.time { text-align: right; margin-left: 7px; width: 72px; letter-spacing: .15px; white-space: nowrap; }
.time span { letter-spacing: .25px; }
.bell { margin-left: 8px; }
</style>
